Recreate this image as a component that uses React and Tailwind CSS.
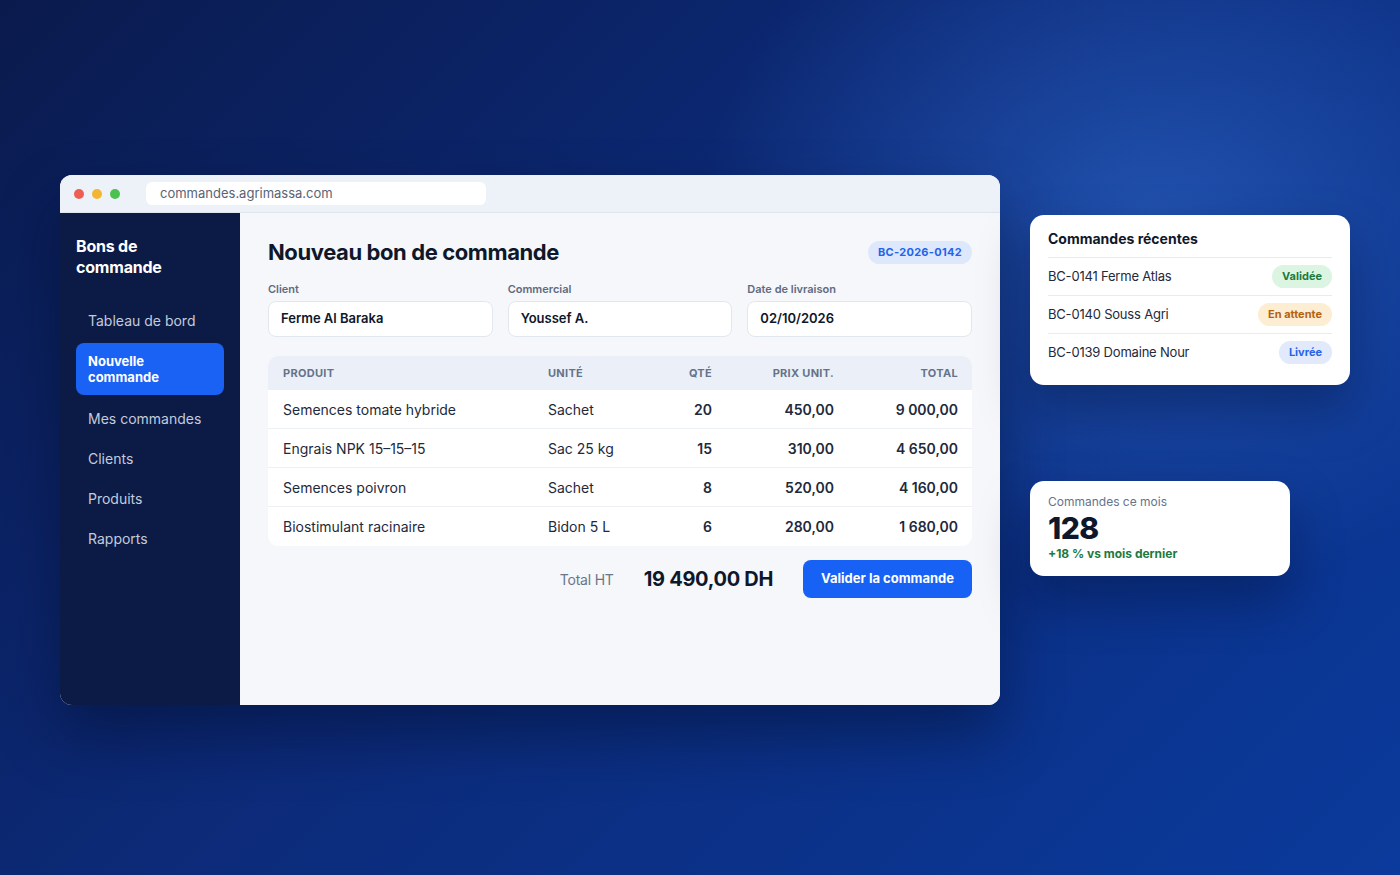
import { useState } from 'react';

const NAV_ITEMS = ['Tableau de bord', 'Nouvelle commande', 'Mes commandes', 'Clients', 'Produits', 'Rapports'];

const LINES = [
  { product: 'Semences tomate hybride', unit: 'Sachet', qty: '20', price: '450,00', total: '9 000,00' },
  { product: 'Engrais NPK 15–15–15', unit: 'Sac 25 kg', qty: '15', price: '310,00', total: '4 650,00' },
  { product: 'Semences poivron', unit: 'Sachet', qty: '8', price: '520,00', total: '4 160,00' },
  { product: 'Biostimulant racinaire', unit: 'Bidon 5 L', qty: '6', price: '280,00', total: '1 680,00' },
];

const RECENT = [
  { label: 'BC-0141 Ferme Atlas', status: 'Validée', tone: 'bg-[#dcf5e3] text-[#1d7a3e]' },
  { label: 'BC-0140 Souss Agri', status: 'En attente', tone: 'bg-[#fdedd3] text-[#b5620e]' },
  { label: 'BC-0139 Domaine Nour', status: 'Livrée', tone: 'bg-[#e1e9fb] text-[#2563eb]' },
];

function Field({ label, value }) {
  return (
    <div className="flex flex-col">
      <span className="mb-[5px] text-[11px] font-semibold leading-[14px] text-[#5f6b80]">{label}</span>
      <div className="flex h-[36px] items-center rounded-[8px] border border-[#e2e7ef] bg-white px-[12px] text-[13px] font-semibold text-[#0f172a]">
        {value}
      </div>
    </div>
  );
}

function Sidebar() {
  const [active] = useState('Nouvelle commande');

  return (
    <aside className="flex w-[180px] shrink-0 flex-col bg-[#0c1b46] px-[16px] pt-[23px]">
      <h2 className="text-[16px] font-bold leading-[21px] tracking-[-0.2px] text-white">
        Bons de
        <br />
        commande
      </h2>
      <nav className="mt-[25px] flex flex-col gap-[6px]">
        {NAV_ITEMS.map((item) =>
          item === active ? (
            <div
              className="w-[148px] rounded-[8px] bg-[#1a62f4] px-[12px] py-[10px] text-[13px] font-bold leading-[16px] text-white"
              key={item}
            >
              Nouvelle
              <br />
              commande
            </div>
          ) : (
            <div className="flex h-[34px] items-center px-[12px] text-[14px] text-[#c3cbdc]" key={item}>
              {item}
            </div>
          ),
        )}
      </nav>
    </aside>
  );
}

function OrderForm() {
  return (
    <main className="flex-1 bg-[#f5f7fb] px-[28px] pt-[23px]">
      <div className="flex items-center justify-between">
        <h1 className="text-[22px] font-bold tracking-[-0.4px] text-[#0f172a]">Nouveau bon de commande</h1>
        <span className="rounded-full bg-[#dde8fc] px-[10px] py-[3px] text-[11px] font-bold tracking-[0.3px] text-[#2563eb]">
          BC-2026-0142
        </span>
      </div>

      <div className="mt-[13px] grid grid-cols-3 gap-[15px]">
        <Field label="Client" value="Ferme Al Baraka" />
        <Field label="Commercial" value="Youssef A." />
        <Field label="Date de livraison" value="02/10/2026" />
      </div>

      <div className="mt-[19px] overflow-hidden rounded-[10px] bg-white">
        <div className="grid h-[34px] grid-cols-[265px_1fr_60px_122px_124px] items-center bg-[#ebf0f8] pl-[15px] pr-[14px] text-[11px] font-bold tracking-[0.3px] text-[#66738a]">
          <span>PRODUIT</span>
          <span>UNITÉ</span>
          <span className="text-right">QTÉ</span>
          <span className="text-right">PRIX UNIT.</span>
          <span className="text-right">TOTAL</span>
        </div>
        {LINES.map((line, index) => (
          <div
            className={`grid h-[39px] grid-cols-[265px_1fr_60px_122px_124px] items-center pl-[15px] pr-[14px] text-[14px] text-[#1e293b] ${
              index < LINES.length - 1 ? 'border-b border-[#edf0f5]' : ''
            }`}
            key={line.product}
          >
            <span>{line.product}</span>
            <span>{line.unit}</span>
            <span className="text-right font-semibold">{line.qty}</span>
            <span className="text-right font-semibold">{line.price}</span>
            <span className="text-right font-semibold">{line.total}</span>
          </div>
        ))}
      </div>

      <div className="mt-[14px] flex items-center justify-end">
        <span className="text-[14px] tracking-[-0.2px] text-[#6b7588]">Total HT</span>
        <span className="ml-[30px] text-[20px] font-bold tracking-[-0.3px] text-[#0f172a]">19 490,00 DH</span>
        <button
          className="ml-[30px] h-[38px] rounded-[8px] bg-[#1762f5] px-[18px] text-[13px] font-bold text-white"
          type="button"
        >
          Valider la commande
        </button>
      </div>
    </main>
  );
}

function BrowserWindow() {
  return (
    <div className="flex h-[530px] w-[940px] shrink-0 flex-col overflow-hidden rounded-[12px] bg-[#f5f7fb] shadow-[0_30px_60px_rgba(2,10,40,0.45)]">
      <div className="flex h-[38px] shrink-0 items-center border-b border-[#dfe5ef] bg-[#edf1f8] pl-[14px]">
        <div className="flex gap-[8px]">
          <span className="h-[10px] w-[10px] rounded-full bg-[#ee5e55]" />
          <span className="h-[10px] w-[10px] rounded-full bg-[#f2b632]" />
          <span className="h-[10px] w-[10px] rounded-full bg-[#4cc150]" />
        </div>
        <div className="ml-[26px] flex h-[23px] w-[340px] items-center rounded-[6px] bg-white px-[14px] text-[13px] text-[#5a6375]">
          commandes.agrimassa.com
        </div>
      </div>
      <div className="flex flex-1">
        <Sidebar />
        <OrderForm />
      </div>
    </div>
  );
}

function RecentCard() {
  return (
    <div className="w-[320px] rounded-[14px] bg-white px-[18px] pb-[14px] pt-[13px] shadow-[0_24px_50px_rgba(2,10,40,0.35)]">
      <h3 className="pb-[8px] text-[14px] font-bold text-[#0f172a]">Commandes récentes</h3>
      {RECENT.map((row) => (
        <div className="flex h-[38px] items-center justify-between border-t border-[#e8ecf2]" key={row.label}>
          <span className="text-[13px] tracking-[-0.2px] text-[#1e293b]">{row.label}</span>
          <span className={`rounded-full px-[10px] py-[3px] text-[11px] font-bold ${row.tone}`}>{row.status}</span>
        </div>
      ))}
    </div>
  );
}

function StatCard() {
  return (
    <div className="w-[260px] rounded-[14px] bg-white px-[18px] pb-[14px] pt-[13px] shadow-[0_24px_50px_rgba(2,10,40,0.35)]">
      <p className="text-[12px] leading-[16px] text-[#66738a]">Commandes ce mois</p>
      <p className="mt-[2px] text-[30px] font-extrabold leading-[32px] tracking-[-0.5px] text-[#0f172a]">128</p>
      <p className="mt-[2px] text-[12px] font-bold leading-[16px] text-[#1d7a3e]">+18 % vs mois dernier</p>
    </div>
  );
}

export default function App() {
  return (
    <div
      className="relative h-[875px] w-full overflow-hidden bg-[linear-gradient(135deg,#0a1a4d_0%,#0c2a78_45%,#0a3a9c_100%)] font-['Inter',sans-serif]"
    >
      <div className="pointer-events-none absolute left-[700px] top-[-150px] h-[750px] w-[900px] rounded-full bg-[radial-gradient(closest-side,rgba(50,110,210,0.55),rgba(30,80,180,0)_100%)]" />
      <div className="relative flex pl-[60px] pt-[175px]">
        <BrowserWindow />
        <div className="ml-[30px] flex flex-col pt-[40px]">
          <RecentCard />
          <div className="mt-[96px]">
            <StatCard />
          </div>
        </div>
      </div>
    </div>
  );
}
